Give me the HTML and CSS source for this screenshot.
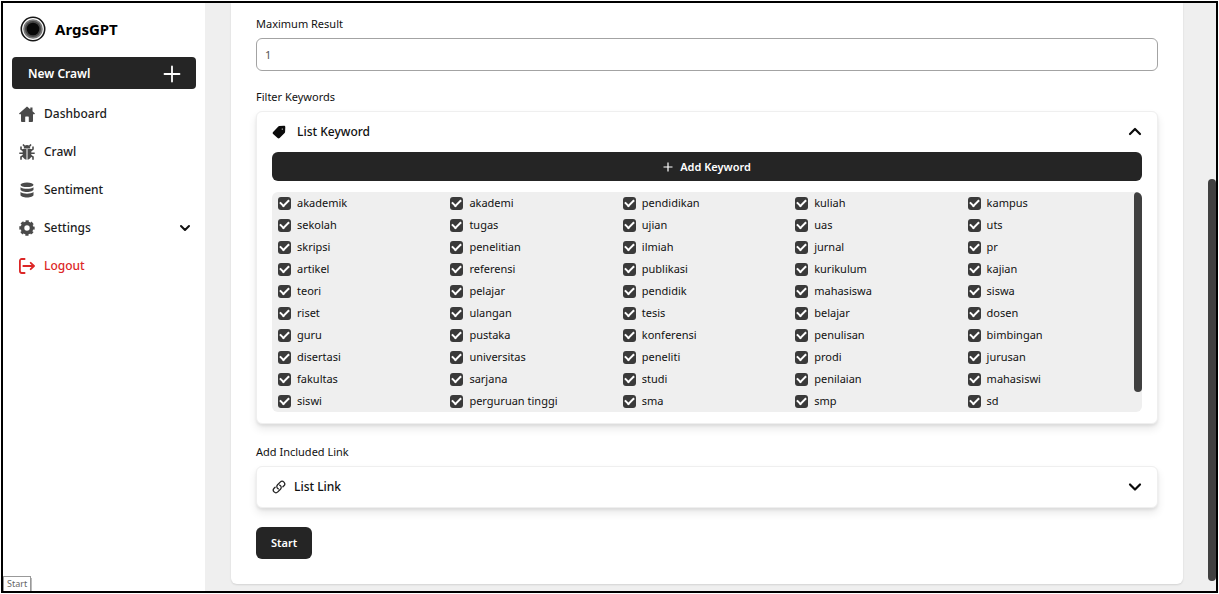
FILE: index.html
```html
<!DOCTYPE html>
<html lang="en">
<head>
<meta charset="utf-8">
<title>ArgsGPT</title>
<link rel="stylesheet" href="styles.css">
</head>
<body>
<div class="frame">
  <aside class="sidebar">
    <div class="brand">
      <svg class="logo" viewBox="0 0 26 26" aria-hidden="true"><circle cx="13" cy="13" r="11.700" fill="#fff" stroke="#161616" stroke-width="1.600"/><circle cx="13" cy="13" r="9.800" fill="#777"/><circle cx="13" cy="13" r="8" fill="#444"/><circle cx="13" cy="13" r="6.300" fill="#080808"/></svg>
      <span>ArgsGPT</span>
    </div>
    <button class="new-crawl" type="button">New Crawl
      <svg width="18" height="18" viewBox="0 0 18 18" aria-hidden="true"><path d="M9 1.500v15M1.500 9h15" stroke="#fff" stroke-width="1.800" stroke-linecap="round"/></svg>
    </button>
    <nav class="menu">
      <a class="item" href="#"><svg viewBox="0 0 16 16" aria-hidden="true"><path d="M8 .4.3 7.300c-.4.4-.2 1 .4 1H2V15c0 .6.4.9.9.9h3.300v-4.700c0-.4.2-.6.6-.6h2.400c.4 0 .6.2.6.6v4.700h3.300c.5 0 .9-.3.9-.9V8.300h1.300c.6 0 .8-.6.4-1L13.500 5.300V1.500h-2.200v1.800z" fill="#4a4a4a"/></svg>Dashboard</a>
      <a class="item" href="#"><svg viewBox="0 0 16 16" aria-hidden="true"><path d="M4.700 4.400C4.700 2.300 6.200 1.100 8 1.100s3.300 1.200 3.300 3.300z" fill="#4a4a4a"/><path d="M3.700 5h3.800v10.700C5.300 15.400 3.700 13.800 3.700 11.800zM12.300 5H8.500v10.700c2.200-.3 3.800-1.900 3.800-3.900z" fill="#4a4a4a"/><path d="M5.700 2.500 4 .5M10.300 2.500l1.700-2M4.500 6.800 2 5V2.500M11.500 6.800 14 5V2.500M4.500 9.200H.3M11.500 9.200h4.200M4.500 11.500 2 13v2.700M11.500 11.500 14 13v2.700" fill="none" stroke="#4a4a4a" stroke-width="1.600"/></svg>Crawl</a>
      <a class="item" href="#"><svg viewBox="0 0 16 16" aria-hidden="true"><ellipse cx="8" cy="2.800" rx="6.500" ry="2.300" fill="#4a4a4a"/><path d="M1.500 5.200c1.500 1.300 4 1.600 6.500 1.600s5-.3 6.500-1.600V7.500c0 1.300-3 2.500-6.500 2.500s-6.500-1.200-6.500-2.500zM1.500 10c1.500 1.300 4 1.700 6.500 1.700s5-.4 6.500-1.700v3c0 1.300-3 2.500-6.500 2.500S1.500 14.300 1.500 13z" fill="#4a4a4a"/></svg>Sentiment</a>
      <a class="item" href="#"><svg viewBox="0 0 16 16" aria-hidden="true"><circle cx="8" cy="8" r="4.600" fill="none" stroke="#4a4a4a" stroke-width="3.800"/><circle cx="8" cy="8" r="6.700" fill="none" stroke="#4a4a4a" stroke-width="2" stroke-dasharray="3.200 2.062" stroke-dashoffset="1.600"/></svg>Settings
        <svg class="chevron" viewBox="0 0 14 14" aria-hidden="true"><path d="m3 5 4 4 4-4" fill="none" stroke="#111" stroke-width="2" stroke-linecap="round" stroke-linejoin="round"/></svg></a>
      <a class="item logout" href="#"><svg viewBox="0 0 16 16" aria-hidden="true"><path d="M5.600 1H2.800C1.500 1 .9 1.700.9 2.900v10.200c0 1.200.6 1.900 1.900 1.900h2.800M4.300 8h10.600M11.700 4.800 15 8l-3.300 3.200" fill="none" stroke="#dc2626" stroke-width="1.800" stroke-linecap="round" stroke-linejoin="round"/></svg>Logout</a>
    </nav>
  </aside>
  <main class="main">
    <form class="card">
      <label class="caption" for="max">Maximum Result</label>
      <input class="field" id="max" type="text" value="1">
      <div class="caption">Filter Keywords</div>
      <section class="panel">
        <button class="panel-head" type="button">
          <svg class="tag" viewBox="0 0 14 14" aria-hidden="true"><path d="M7.300 1.100 12 .8c.8 0 1.300.5 1.300 1.200l-.2 4.700c0 .5-.2.900-.5 1.200l-5 5.100c-.6.600-1.400.600-2 0L1.100 8.900c-.6-.6-.6-1.400 0-2l5-5.200c.3-.4.7-.6 1.200-.6z" fill="#0b0b0b"/><circle cx="10.300" cy="4.100" r=".7" fill="#ddd"/></svg>
          <span>List Keyword</span>
          <svg class="arrow" viewBox="0 0 14 14" aria-hidden="true"><path d="m2 9 5-5 5 5" fill="none" stroke="#0b0b0b" stroke-width="2.200" stroke-linecap="round" stroke-linejoin="round"/></svg>
        </button>
        <button class="add" type="button"><svg width="10" height="10" viewBox="0 0 10 10" aria-hidden="true"><path d="M5 .5v9M.5 5h9" stroke="#fff" stroke-width="1.200"/></svg>Add Keyword</button>
        <div class="keywords">
          <div class="grid">
            <label><input type="checkbox" checked>akademik</label><label><input type="checkbox" checked>akademi</label><label><input type="checkbox" checked>pendidikan</label><label><input type="checkbox" checked>kuliah</label><label><input type="checkbox" checked>kampus</label>
            <label><input type="checkbox" checked>sekolah</label><label><input type="checkbox" checked>tugas</label><label><input type="checkbox" checked>ujian</label><label><input type="checkbox" checked>uas</label><label><input type="checkbox" checked>uts</label>
            <label><input type="checkbox" checked>skripsi</label><label><input type="checkbox" checked>penelitian</label><label><input type="checkbox" checked>ilmiah</label><label><input type="checkbox" checked>jurnal</label><label><input type="checkbox" checked>pr</label>
            <label><input type="checkbox" checked>artikel</label><label><input type="checkbox" checked>referensi</label><label><input type="checkbox" checked>publikasi</label><label><input type="checkbox" checked>kurikulum</label><label><input type="checkbox" checked>kajian</label>
            <label><input type="checkbox" checked>teori</label><label><input type="checkbox" checked>pelajar</label><label><input type="checkbox" checked>pendidik</label><label><input type="checkbox" checked>mahasiswa</label><label><input type="checkbox" checked>siswa</label>
            <label><input type="checkbox" checked>riset</label><label><input type="checkbox" checked>ulangan</label><label><input type="checkbox" checked>tesis</label><label><input type="checkbox" checked>belajar</label><label><input type="checkbox" checked>dosen</label>
            <label><input type="checkbox" checked>guru</label><label><input type="checkbox" checked>pustaka</label><label><input type="checkbox" checked>konferensi</label><label><input type="checkbox" checked>penulisan</label><label><input type="checkbox" checked>bimbingan</label>
            <label><input type="checkbox" checked>disertasi</label><label><input type="checkbox" checked>universitas</label><label><input type="checkbox" checked>peneliti</label><label><input type="checkbox" checked>prodi</label><label><input type="checkbox" checked>jurusan</label>
            <label><input type="checkbox" checked>fakultas</label><label><input type="checkbox" checked>sarjana</label><label><input type="checkbox" checked>studi</label><label><input type="checkbox" checked>penilaian</label><label><input type="checkbox" checked>mahasiswi</label>
            <label><input type="checkbox" checked>siswi</label><label><input type="checkbox" checked>perguruan tinggi</label><label><input type="checkbox" checked>sma</label><label><input type="checkbox" checked>smp</label><label><input type="checkbox" checked>sd</label>
          </div>
          <div class="track"><div class="thumb"></div></div>
        </div>
      </section>
      <div class="caption">Add Included Link</div>
      <section class="panel closed">
        <button class="panel-head link-head" type="button">
          <svg viewBox="0 0 24 24" aria-hidden="true"><path d="M13.190 8.688a4.500 4.500 0 0 1 1.242 7.244l-4.500 4.500a4.500 4.500 0 0 1-6.364-6.364l1.757-1.757m13.350-.622 1.757-1.757a4.500 4.500 0 0 0-6.364-6.364l-4.500 4.500a4.500 4.500 0 0 0 1.242 7.244" fill="none" stroke="#222" stroke-width="2.200" stroke-linecap="round" stroke-linejoin="round"/></svg>
          <span>List Link</span>
          <svg class="arrow" viewBox="0 0 14 14" aria-hidden="true"><path d="m2 4.500 5 5 5-5" fill="none" stroke="#0b0b0b" stroke-width="2.200" stroke-linecap="round" stroke-linejoin="round"/></svg>
        </button>
      </section>
      <button class="start" type="button">Start</button>
    </form>
  </main>
  <div class="page-thumb"></div>
  <div class="tooltip">Start</div>
</div>
</body>
</html>
```
FILE: styles.css
```css
* { box-sizing: border-box; }
body {
  margin: 0;
  padding: 1px;
  height: 100vh;
  overflow: hidden;
  background: #fff;
  color: #111;
  font: 400 11px/16px "Noto Sans", "Open Sans", sans-serif;
}
button, input { font: inherit; color: inherit; margin: 0; }
button { border: 0; cursor: pointer; }
svg { flex: none; display: block; }

.frame {
  position: relative;
  display: flex;
  height: 100%;
  border: 2px solid #000;
  background: #efefef;
  overflow: hidden;
}

.sidebar { flex: none; width: 202px; padding: 13px 9px; background: #fff; }
.brand {
  display: flex;
  align-items: center;
  gap: 9px;
  padding-left: 8px;
  height: 26px;
  color: #000;
  font-size: 15px;
  font-weight: 700;
}
.logo { width: 26px; height: 26px; }
.new-crawl {
  display: flex;
  align-items: center;
  justify-content: space-between;
  width: 100%;
  height: 32px;
  margin-top: 15px;
  padding: 1px 15px 0 16px;
  border-radius: 4px;
  background: #252525;
  color: #fff;
  font-size: 12px;
  font-weight: 600;
}
.menu { display: grid; gap: 6px; margin-top: 9px; }
.item {
  display: flex;
  align-items: center;
  gap: 9px;
  height: 32px;
  padding: 0 4px 0 7px;
  color: #1c1c1c;
  font-size: 12px;
  font-weight: 500;
  text-decoration: none;
}
.item svg { width: 16px; height: 16px; }
.item .chevron { width: 14px; height: 14px; margin-left: auto; }
.logout { color: #dc2626; }

.main { flex: 1; min-width: 0; padding: 0 33px 7px 26px; }
.card {
  height: 100%;
  padding: 13px 25px 0;
  border-radius: 0 0 6px 6px;
  background: #fff;
  box-shadow: 0 1px 2px rgba(0, 0, 0, .12);
}
.caption { display: block; height: 22px; }
.field {
  display: block;
  width: 100%;
  height: 33px;
  margin-bottom: 18px;
  padding: 0 8px;
  border: 1px solid #a3a3a3;
  border-radius: 6px;
  background: #fff;
  color: #555;
}
.panel {
  margin-bottom: 20px;
  padding: 0 15px 11px;
  border: 1px solid #efefef;
  border-radius: 6px;
  background: #fff;
  box-shadow: 0 5px 9px rgba(0, 0, 0, .09), 0 2px 3px rgba(0, 0, 0, .07);
}
.closed { padding-bottom: 0; margin-bottom: 19px; }
.panel-head {
  display: flex;
  align-items: center;
  gap: 11px;
  width: 100%;
  height: 40px;
  padding: 0;
  background: none;
  color: #111;
  font-size: 12px;
  font-weight: 500;
}
.panel-head svg { width: 14px; height: 14px; }
.link-head { gap: 8px; }
.panel-head .arrow { margin-left: auto; }
.add {
  display: flex;
  align-items: center;
  justify-content: center;
  gap: 7px;
  width: 100%;
  height: 29px;
  border-radius: 6px;
  background: #252525;
  color: #fff;
  font-weight: 600;
}
.keywords {
  display: flex;
  margin-top: 11px;
  border-radius: 6px;
  background: #efefef;
  overflow: hidden;
}
.grid {
  flex: 1;
  display: grid;
  grid-template-columns: repeat(5, 1fr);
  grid-auto-rows: 22px;
}
.grid label { display: flex; align-items: center; gap: 6px; padding-left: 6px; }
.grid input {
  appearance: none;
  display: grid;
  place-items: center;
  flex: none;
  width: 13px;
  height: 13px;
  border-radius: 3px;
  background: #3a3a3a;
}
.grid input:checked::before {
  content: "";
  width: 7px;
  height: 4px;
  margin-bottom: 3px;
  border: solid #fff;
  border-width: 0 0 2px 2px;
  transform: rotate(-45deg);
}
.track { flex: none; width: 8px; }
.thumb { height: 91%; border-radius: 4px; background: #404040; }
.start {
  height: 32px;
  padding: 0 15px;
  border-radius: 6px;
  background: #252525;
  color: #fff;
  font-weight: 600;
}
.page-thumb {
  position: absolute;
  top: 30%;
  right: 0;
  bottom: 10px;
  width: 8px;
  border-radius: 4px;
  background: #404040;
}
.tooltip {
  position: absolute;
  left: 0;
  bottom: 0;
  padding: 0 3px;
  border: 1px solid #999;
  border-width: 1px 1px 0;
  box-shadow: 1px 2px 0 #bbb;
  background: #fff;
  color: #666;
  font-size: 9px;
  line-height: 14px;
}
```
